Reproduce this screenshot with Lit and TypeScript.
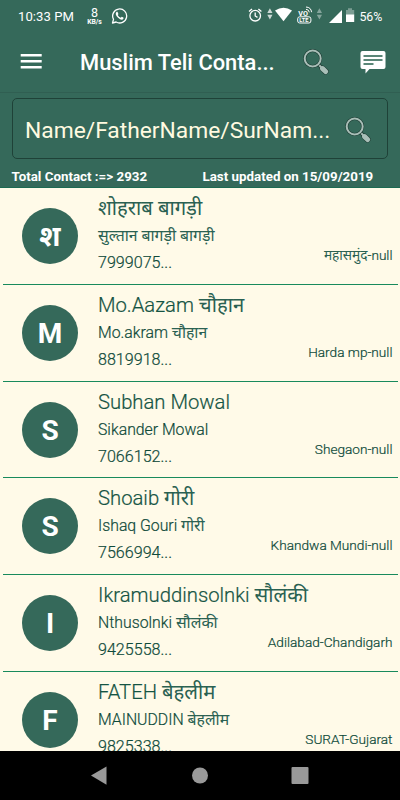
import { LitElement, html, css } from "lit";

interface Contact {
  initial: string;
  name: string;
  father: string;
  phone: string;
  place: string;
}

const CONTACTS: Contact[] = [
  { initial: "श", name: "शोहराब बागड़ी", father: "सुल्तान बागड़ी बागड़ी", phone: "7999075...", place: "महासमुंद-null" },
  { initial: "M", name: "Mo.Aazam चौहान", father: "Mo.akram चौहान", phone: "8819918...", place: "Harda mp-null" },
  { initial: "S", name: "Subhan Mowal", father: "Sikander Mowal", phone: "7066152...", place: "Shegaon-null" },
  { initial: "S", name: "Shoaib गोरी", father: "Ishaq Gouri गोरी", phone: "7566994...", place: "Khandwa Mundi-null" },
  { initial: "I", name: "Ikramuddinsolnki सौलंकी", father: "Nthusolnki सौलंकी", phone: "9425558...", place: "Adilabad-Chandigarh" },
  { initial: "F", name: "FATEH बेहलीम", father: "MAINUDDIN बेहलीम", phone: "9825338...", place: "SURAT-Gujarat" },
];

// Latin letters are set light, Devanagari runs in the regular weight.
const mixed = (text: string) =>
  text
    .split(/([\u0900-\u097F]+(?: [\u0900-\u097F]+)*)/)
    .map((run, i) => (i % 2 ? html`<span class="deva">${run}</span>` : run));

class ContactRow extends LitElement {
  static properties = { contact: { attribute: false } };
  declare contact: Contact;

  static styles = css`
    :host {
      display: flex;
      box-sizing: border-box;
      height: 96.7px;
      margin: 0 2.5px;
      padding: 0 5px 0 19.5px;
      border-bottom: 1px solid #188a5c;
      color: #0f4a3a;
      white-space: nowrap;
    }
    .avatar {
      flex: none;
      width: 56px;
      height: 56px;
      margin-top: 20px;
      border-radius: 50%;
      background: #35695a;
      color: #fff;
      font-size: 28px;
      font-weight: 700;
      line-height: 57px;
      text-align: center;
    }
    .info {
      flex: 1;
      min-width: 0;
      margin-left: 20px;
      padding-top: 7px;
      font-weight: 300;
      -webkit-text-stroke: 0.2px;
    }
    .name { font-size: 20.25px; line-height: 27px; height: 27px; color: #155443; }
    .father { font-size: 15.8px; line-height: 28px; height: 27px; }
    .phone { font-size: 16.1px; line-height: 27px; height: 27px; }
    .place { font-size: 13.65px; line-height: 20px; margin-top: 57px; font-weight: 300; -webkit-text-stroke: 0.2px; }
    .deva { font-weight: 400; -webkit-text-stroke: 0; color: #2a6152; }
  `;

  render() {
    const c = this.contact;
    return html`
      <div class="avatar">${c.initial}</div>
      <div class="info">
        <div class="name">${mixed(c.name)}</div>
        <div class="father">${mixed(c.father)}</div>
        <div class="phone">${c.phone}</div>
      </div>
      <div class="place">${mixed(c.place)}</div>
    `;
  }
}
customElements.define("contact-row", ContactRow);

const magnifier = html`
  <svg width="26" height="26" viewBox="0 0 26 26">
    <path d="M15.500 15.500l3.500 3.500" stroke="#1d3a32" stroke-width="3.600" />
    <path d="M19.600 19.600l3 2.900" stroke="#1d3a32" stroke-width="6" stroke-linecap="round" />
    <path d="M19.600 19.600l3 2.900" stroke="#a9bfb8" stroke-width="5" stroke-linecap="round" />
    <path d="M15.500 15.500l3.500 3.500" stroke="#a9bfb8" stroke-width="2" />
    <circle cx="9.700" cy="9.500" r="8" fill="none" stroke="#1d3a32" stroke-width="3" />
    <circle cx="9.700" cy="9.500" r="8" fill="none" stroke="#a9bfb8" stroke-width="2" />
  </svg>
`;

class AppRoot extends LitElement {
  static styles = css`
    :host {
      display: flex;
      flex-direction: column;
      width: 400px;
      height: 800px;
      overflow: hidden;
      background: #fffae8;
      font-family: Roboto, "Noto Sans Devanagari", "Noto Sans", sans-serif;
      white-space: nowrap;
    }
    svg { display: block; flex: none; }
    .top { flex: none; background: #35695a; color: #fff; }
    .status { display: flex; align-items: center; height: 32px; padding-left: 18px; font-size: 13.1px; letter-spacing: 0.05px; }
    .clock { width: 68px; }
    .rate { display: flex; flex-direction: column; width: 17px; text-align: center; font-size: 12.5px; line-height: 11px; }
    .rate small { font-size: 6.8px; line-height: 8px; font-weight: 700; letter-spacing: 0; }
    .whatsapp { margin-left: 7.5px; }
    .tray { margin-left: 119px; }
    .battery { margin-left: 5px; font-size: 12.4px; letter-spacing: -0.1px; }
    .appbar { display: flex; align-items: center; height: 60px; border-bottom: 1px solid #305f52; padding-left: 20px; }
    .title { width: 222.5px; margin-left: 38px; font-size: 21.9px; font-weight: 500; }
    .chat { margin-left: 31px; }
    .search {
      display: flex;
      align-items: center;
      box-sizing: border-box;
      width: 376px;
      height: 61px;
      margin: 5px 0 0 12px;
      padding: 2px 0 0 12px;
      border: 1px solid #1f4238;
      border-radius: 5px;
      color: #fffae0;
      font-size: 22.8px;
    }
    .query { width: 320px; margin-top: 1px; }
    .summary {
      display: flex;
      box-sizing: border-box;
      height: 29.4px;
      padding: 8px 0 0 11.5px;
      border-bottom: 1px solid #1c6a51;
      font-size: 13.35px;
      line-height: 20px;
      font-weight: 700;
    }
    .total { width: 191px; }
    .list { flex: 1; min-height: 0; overflow: hidden; }
    .nav { flex: none; display: flex; align-items: center; height: 49px; background: #000; }
  `;

  render() {
    return html`
      <div class="top">
        <div class="status">
          <span class="clock">10:33 PM</span>
          <span class="rate"><span>8</span><small>KB/s</small></span>
          <svg class="whatsapp" width="17" height="17" viewBox="0 0 17 17">
            <path d="M1.500 15l1-3.700A7 7 0 1 1 5.100 14z" fill="none" stroke="#fff" stroke-width="1.300" stroke-linejoin="round" />
            <path d="M5.400 3.900c-1.400 1.400-.5 3.700 1.700 5.800 2.200 2.100 4.400 2.600 5.300 1 .3-.6.2-.9-.1-1.100l-1.500-.8c-.4-.1-.6.9-1.100.9-1.100-.2-2.600-1.700-2.900-2.700 0-.5.800-.6.600-1.100l-.7-1.700c-.2-.5-.8-.6-1.300-.3z" fill="#fff" />
          </svg>
          <svg class="tray" width="108" height="20" viewBox="247 6 108 20">
            <g fill="none" stroke="#fff" stroke-width="1.300">
              <circle cx="255.200" cy="15.700" r="5.300" />
              <path d="M255.200 12.600v3.400l2.300 1.400M249 11.600l3-2.600M258.400 9l3 2.600" />
            </g>
            <path d="M267.300 13l2.600-4.800 2.600 4.800zM267.300 14.700l2.600 4.800 2.600-4.800z" fill="#fff" opacity=".75" />
            <path d="M275 10.500q8.600-5.500 17 0l-8.500 10.800z" fill="#fff" />
            <text x="298.200" y="15.800" font-size="7.200" font-weight="700" fill="#fff">VO</text>
            <path d="M306 9.300q3 .2 3.300 3M306 7q5 .2 5.600 5.200" fill="none" stroke="#fff" stroke-width="1" />
            <rect x="297.700" y="16.800" width="13.200" height="6.200" rx="2" fill="none" stroke="#fff" stroke-width="1" />
            <text x="299.200" y="22" font-size="5.600" font-weight="700" fill="#fff">LTE</text>
            <path d="M316.800 13l2.600-4.800 2.600 4.800zM316.800 14.700l2.600 4.800 2.600-4.800z" fill="#fff" opacity=".4" />
            <path d="M329 23l13-13v13z" fill="#fff" />
            <path d="M346 15V10h2V8.300h4V10h2.200v5z" fill="#fff" opacity=".35" />
            <path d="M346 14.500h8.200V22h-8.200z" fill="#fff" />
          </svg>
          <span class="battery">56%</span>
        </div>
        <div class="appbar">
          <svg width="22" height="16" viewBox="0 0 22 16">
            <path d="M.7 1.300h21M.7 7.300h21M.7 13.300h21" stroke="#fff" stroke-width="2.400" />
          </svg>
          <div class="title">Muslim Teli Conta...</div>
          ${magnifier}
          <svg class="chat" width="26" height="24" viewBox="0 0 26 24">
            <path d="M2.500 1h21q2 0 2 2v14q0 2-2 2H9.500L5.500 23.600V19h-3q-2 0-2-2V3q0-2 2-2z" fill="#fff" />
            <path d="M3.500 6h19M3.500 10h19M3.500 14h10" stroke="#245f4c" stroke-width="1.700" />
          </svg>
        </div>
        <div class="search"><div class="query">Name/FatherName/SurNam...</div>${magnifier}</div>
        <div class="summary">
          <span class="total">Total Contact :=&gt; 2932</span>
          <span>Last updated on 15/09/2019</span>
        </div>
      </div>
      <div class="list">
        ${CONTACTS.map((c) => html`<contact-row .contact=${c}></contact-row>`)}
      </div>
      <div class="nav">
        <svg width="400" height="49" viewBox="0 751 400 49" fill="#999">
          <path d="M91 775.500l15.500-9v18.200z" />
          <circle cx="200" cy="775.500" r="8" />
          <rect x="291.500" y="767" width="17" height="17" rx="1" />
        </svg>
      </div>
    `;
  }
}
customElements.define("app-root", AppRoot);
